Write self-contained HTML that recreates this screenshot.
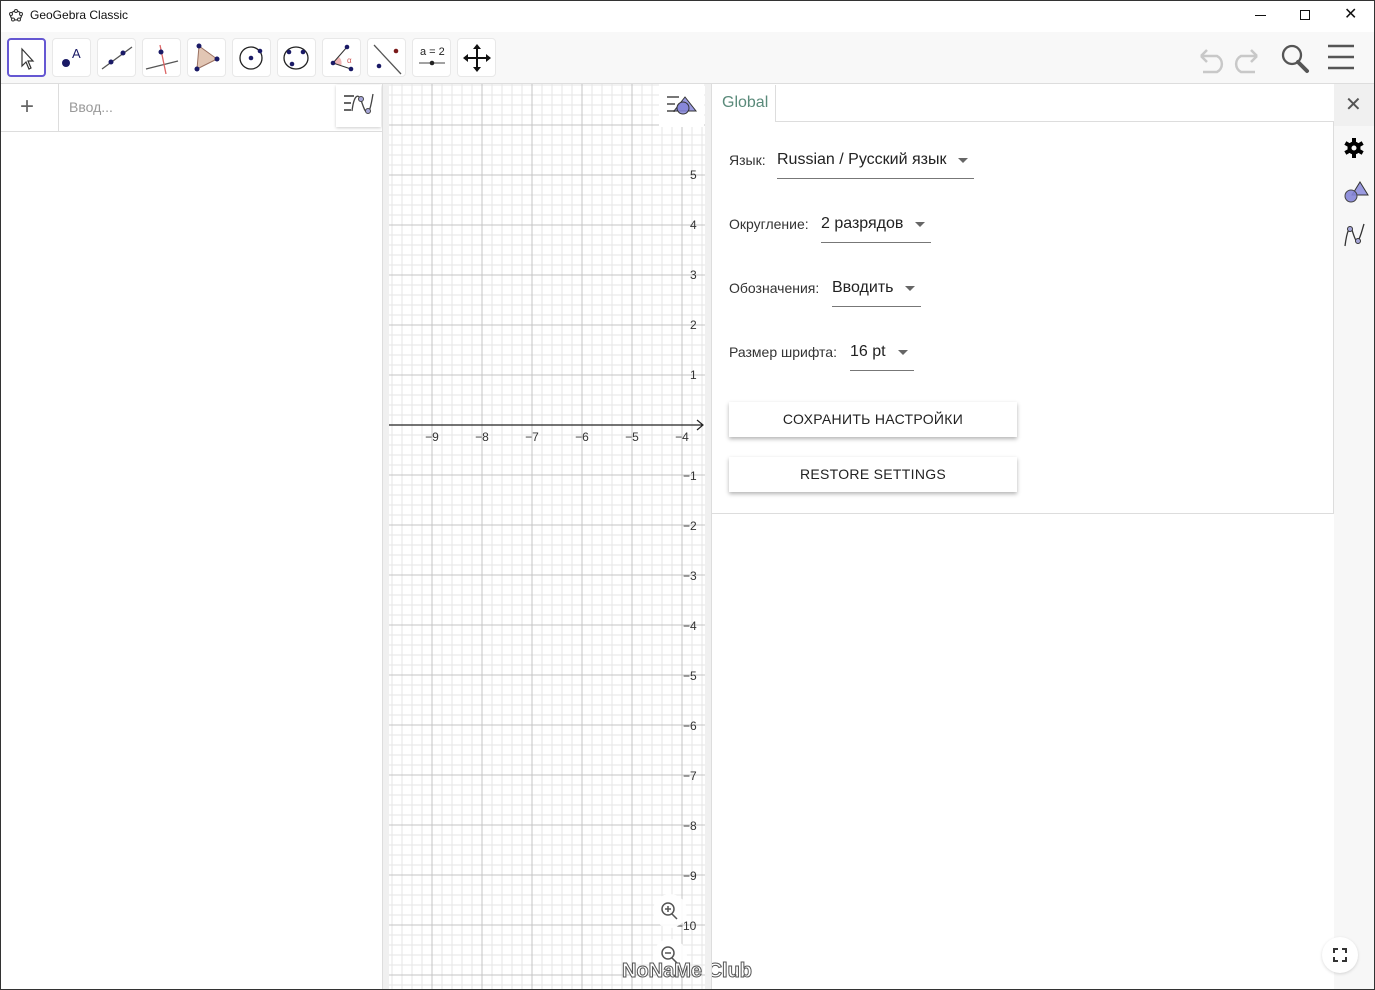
<!DOCTYPE html>
<html><head><meta charset="utf-8"><style>
*{box-sizing:border-box;margin:0;padding:0}
body{width:1375px;height:990px;overflow:hidden;background:#fff;font-family:"Liberation Sans","Noto Sans CJK SC",sans-serif;position:relative}
.abs{position:absolute}
.tb{left:0;top:32px;width:1375px;height:52px;background:#f8f8f8;border-bottom:1px solid #ddd}
.tool{position:absolute;top:6px;width:39px;height:39px;border-radius:4px;background:#fff;border:1px solid #e8e8e8}
.lbl{font-size:14px;color:#333;position:absolute;white-space:nowrap}
.sel{position:absolute;font-size:16px;color:#222;border-bottom:1px solid #777;height:28px;white-space:nowrap}
.sel i{position:absolute;right:6px;top:7px;width:0;height:0;border-left:5px solid transparent;border-right:5px solid transparent;border-top:5px solid #666}
.btn{position:absolute;left:729px;width:288px;height:35px;background:#fff;box-shadow:0 2px 4px rgba(0,0,0,.3);font-size:14px;color:#222;text-align:center;line-height:35px;letter-spacing:.3px}
</style></head><body>
<div class="abs" style="left:0;top:0;width:1375px;height:32px;background:#fff"></div>
<svg class="abs" style="left:9px;top:8px" width="14" height="14" viewBox="0 0 14 14"><ellipse cx="7" cy="7.5" rx="5.5" ry="4.5" fill="none" stroke="#333" stroke-width="1.2"/><circle cx="2" cy="6" r="1.5" fill="#fff" stroke="#333"/><circle cx="7" cy="3" r="1.5" fill="#fff" stroke="#333"/><circle cx="12" cy="6" r="1.5" fill="#fff" stroke="#333"/><circle cx="4" cy="11.5" r="1.5" fill="#fff" stroke="#333"/><circle cx="10" cy="11.5" r="1.5" fill="#fff" stroke="#333"/></svg>
<div class="abs" style="left:30px;top:8px;font-size:12px;color:#111">GeoGebra Classic</div>
<div class="abs" style="left:1255px;top:15px;width:11px;height:1px;background:#111"></div>
<div class="abs" style="left:1300px;top:10px;width:10px;height:10px;border:1px solid #111"></div>
<div class="abs" style="left:1344px;top:4px;font-size:16px;color:#111">✕</div>

<div class="abs tb"></div>
<div class="tool" style="left:7px;top:38px;border:2px solid #6557d2"><svg width="35" height="35"><path d="M13 9 L13 26 L17 22 L20 29 L22 28 L19 21 L24 21 Z" fill="#fff" stroke="#333" stroke-width="1.2"/></svg></div>
<div class="tool" style="left:52px;top:38px"><svg width="37" height="37"><circle cx="13" cy="24" r="4" fill="#1a1a66"/><text x="19" y="19" font-size="13" fill="#1a1a66" font-family="Liberation Sans">A</text></svg></div>
<div class="tool" style="left:97px;top:38px"><svg width="37" height="37"><line x1="4" y1="30" x2="34" y2="8" stroke="#555" stroke-width="1.3"/><circle cx="13" cy="23" r="2.5" fill="#1a1a66"/><circle cx="25" cy="14" r="2.5" fill="#1a1a66"/></svg></div>
<div class="tool" style="left:142px;top:38px"><svg width="37" height="37"><line x1="3" y1="30" x2="35" y2="22" stroke="#555" stroke-width="1.3"/><line x1="17" y1="6" x2="23" y2="35" stroke="#d66" stroke-width="1.3"/><circle cx="18" cy="13" r="2.5" fill="#1a1a66"/></svg></div>
<div class="tool" style="left:187px;top:38px"><svg width="37" height="37"><path d="M11 7 L29 20 L9 30 Z" fill="#e2c6b4" stroke="#9a7060"/><circle cx="11" cy="7" r="2.5" fill="#1a1a66"/><circle cx="29" cy="20" r="2.5" fill="#1a1a66"/><circle cx="9" cy="30" r="2.5" fill="#1a1a66"/></svg></div>
<div class="tool" style="left:232px;top:38px"><svg width="37" height="37"><circle cx="18" cy="19" r="11" fill="none" stroke="#222" stroke-width="1.3"/><circle cx="18" cy="19" r="2.3" fill="#1a1a66"/><circle cx="27" cy="12" r="2.3" fill="#1a1a66"/></svg></div>
<div class="tool" style="left:277px;top:38px"><svg width="37" height="37"><ellipse cx="18" cy="19" rx="12" ry="11" fill="none" stroke="#222" stroke-width="1.3"/><circle cx="11" cy="13" r="2.3" fill="#1a1a66"/><circle cx="25" cy="13" r="2.3" fill="#1a1a66"/><circle cx="14" cy="25" r="2.3" fill="#1a1a66"/></svg></div>
<div class="tool" style="left:322px;top:38px"><svg width="37" height="37"><path d="M10 24 L18 27 A8 8 0 0 0 16 18 Z" fill="#f2b8b8"/><line x1="10" y1="24" x2="24" y2="8" stroke="#333"/><line x1="10" y1="24" x2="28" y2="30" stroke="#333"/><circle cx="10" cy="24" r="2.3" fill="#1a1a66"/><circle cx="24" cy="8" r="2.3" fill="#1a1a66"/><circle cx="28" cy="30" r="2.3" fill="#1a1a66"/><text x="24" y="24" font-size="8" fill="#c55">α</text></svg></div>
<div class="tool" style="left:367px;top:38px"><svg width="37" height="37"><line x1="6" y1="6" x2="33" y2="35" stroke="#555" stroke-width="1.3"/><circle cx="28" cy="12" r="2.3" fill="#7a1a1a"/><circle cx="11" cy="27" r="2.3" fill="#1a1a66"/></svg></div>
<div class="tool" style="left:412px;top:38px"><svg width="37" height="37"><text x="7" y="16" font-size="11" fill="#222" font-family="Liberation Sans">a = 2</text><line x1="6" y1="24" x2="32" y2="24" stroke="#444"/><circle cx="19" cy="24" r="2.3" fill="#222"/></svg></div>
<div class="tool" style="left:457px;top:38px"><svg width="37" height="37"><path d="M19 7 V31 M7 19 H31" stroke="#111" stroke-width="2"/><path d="M19 5 L15 10 H23Z M19 33 L15 28 H23Z M5 19 L10 15 V23Z M33 19 L28 15 V23Z" fill="#111"/></svg></div>

<svg class="abs" style="left:1195px;top:42px" width="160" height="32"><path d="M6 14 H22 A9 9 0 0 1 22 30 H8 M6 14 L12 8 M6 14 L12 20" fill="none" stroke="#c8c8c8" stroke-width="2.5"/><path d="M62 14 H46 A9 9 0 0 0 46 30 H60 M62 14 L56 8 M62 14 L56 20" fill="none" stroke="#c8c8c8" stroke-width="2.5"/><circle cx="97" cy="13" r="9" fill="none" stroke="#555" stroke-width="2.3"/><path d="M103 20 L112 29" stroke="#555" stroke-width="4" stroke-linecap="round"/><path d="M134 4 H160 M134 15 H160 M134 26 H160" stroke="#555" stroke-width="2.5" transform="translate(-1,0)"/></svg>

<div class="abs" style="left:0;top:84px;width:382px;height:906px;background:#fff"></div>
<div class="abs" style="left:0;top:131px;width:382px;height:1px;background:#ddd"></div>
<div class="abs" style="left:58px;top:84px;width:1px;height:47px;background:#ddd"></div>
<div class="abs" style="left:20px;top:93px;font-size:24px;color:#666;font-weight:300">+</div>
<div class="abs" style="left:69px;top:99px;font-size:14px;color:#999">Ввод...</div>
<div class="abs" style="left:336px;top:85px;width:45px;height:42px;background:#fff;box-shadow:0 1px 3px rgba(0,0,0,.2)"><svg width="45" height="42"><path d="M8 11 H18 M8 18 H15 M8 25 H15" stroke="#666" stroke-width="2"/><path d="M16 26 C18 10 22 8 25 15 C28 24 30 30 33 26 C35 22 36 14 37 9" fill="none" stroke="#444" stroke-width="1.3"/><circle cx="25" cy="14" r="2.5" fill="#a6a6d8" stroke="#444"/><circle cx="32" cy="26" r="2.5" fill="#a6a6d8" stroke="#444"/></svg></div>
<div class="abs" style="left:382px;top:84px;width:7px;height:906px;background:#f0f0f0;border-left:1px solid #ddd"></div>

<svg class="abs" style="left:389px;top:84px" width="316" height="906">
<path stroke="#e6e6e6" d="M3 0V906M13 0V906M23 0V906M33 0V906M53 0V906M63 0V906M73 0V906M83 0V906M103 0V906M113 0V906M123 0V906M133 0V906M153 0V906M163 0V906M173 0V906M183 0V906M203 0V906M213 0V906M223 0V906M233 0V906M253 0V906M263 0V906M273 0V906M283 0V906M303 0V906M313 0V906"/>
<path stroke="#e6e6e6" d="M0 1H316M0 11H316M0 21H316M0 31H316M0 51H316M0 61H316M0 71H316M0 81H316M0 101H316M0 111H316M0 121H316M0 131H316M0 151H316M0 161H316M0 171H316M0 181H316M0 201H316M0 211H316M0 221H316M0 231H316M0 251H316M0 261H316M0 271H316M0 281H316M0 301H316M0 311H316M0 321H316M0 331H316M0 351H316M0 361H316M0 371H316M0 381H316M0 401H316M0 411H316M0 421H316M0 431H316M0 451H316M0 461H316M0 471H316M0 481H316M0 501H316M0 511H316M0 521H316M0 531H316M0 551H316M0 561H316M0 571H316M0 581H316M0 601H316M0 611H316M0 621H316M0 631H316M0 651H316M0 661H316M0 671H316M0 681H316M0 701H316M0 711H316M0 721H316M0 731H316M0 751H316M0 761H316M0 771H316M0 781H316M0 801H316M0 811H316M0 821H316M0 831H316M0 851H316M0 861H316M0 871H316M0 881H316M0 901H316"/>
<path stroke="#c4c4c4" d="M43 0V906M93 0V906M143 0V906M193 0V906M243 0V906M293 0V906M0 41H316M0 91H316M0 141H316M0 191H316M0 241H316M0 291H316M0 391H316M0 441H316M0 491H316M0 541H316M0 591H316M0 641H316M0 691H316M0 741H316M0 791H316M0 841H316M0 891H316"/>
<path stroke="#222" stroke-width="1.2" d="M0 341H314M308 336L314 341L308 346" fill="none"/>
<g font-family="Liberation Sans" font-size="12" fill="#333" text-anchor="middle">
<text x="43" y="357">−9</text><text x="93" y="357">−8</text><text x="143" y="357">−7</text><text x="193" y="357">−6</text><text x="243" y="357">−5</text><text x="293" y="357">−4</text>
</g>
<g font-family="Liberation Sans" font-size="12" fill="#333">
<text x="301" y="95">5</text><text x="301" y="145">4</text><text x="301" y="195">3</text><text x="301" y="245">2</text><text x="301" y="295">1</text>
<text x="294" y="396">−1</text><text x="294" y="446">−2</text><text x="294" y="496">−3</text><text x="294" y="546">−4</text><text x="294" y="596">−5</text><text x="294" y="646">−6</text><text x="294" y="696">−7</text><text x="294" y="746">−8</text><text x="294" y="796">−9</text><text x="287" y="846">−10</text>
</g>
<rect x="270" y="0" width="45" height="43" fill="#fff"/>
<path d="M278 13H290M278 20H286M278 27H286" stroke="#777" stroke-width="2"/>
<path d="M296 13L307 27H285Z" fill="#9a9ae0" stroke="#333" stroke-width="1"/><circle cx="294" cy="24" r="6" fill="#8585d8" fill-opacity=".85" stroke="#333"/>
<circle cx="281" cy="827" r="17" fill="#fff" fill-opacity=".9"/>
<circle cx="279" cy="825" r="6" fill="none" stroke="#555" stroke-width="1.5"/><path d="M283 830L288 835M276 825H282M279 822V828" stroke="#555" stroke-width="1.5"/>
<circle cx="281" cy="872" r="17" fill="#fff" fill-opacity=".9"/>
<circle cx="279" cy="869" r="6" fill="none" stroke="#555" stroke-width="1.5"/><path d="M283 874L288 879M276 869H282" stroke="#555" stroke-width="1.5"/>
</svg>
<div class="abs" style="left:622px;top:960px;font-size:20px;font-weight:bold;color:#fff;-webkit-text-stroke:1px #555;white-space:nowrap">NoNaMe Club</div>
<div class="abs" style="left:705px;top:84px;width:7px;height:906px;background:#f0f0f0;border-right:1px solid #ddd"></div>

<div class="abs" style="left:712px;top:121px;width:622px;height:393px;border:1px solid #ddd;border-left:none"></div>
<div class="abs" style="left:712px;top:85px;width:64px;height:37px;background:#fff;border-right:1px solid #ddd"></div>
<div class="abs" style="left:722px;top:94px;font-size:16px;color:#5a8a7a">Global</div>
<div class="lbl" style="left:729px;top:152px">Язык:</div>
<div class="sel" style="left:777px;top:151px;width:197px">Russian / Русский язык <i></i></div>
<div class="lbl" style="left:729px;top:216px">Округление:</div>
<div class="sel" style="left:821px;top:215px;width:110px">2 разрядов <i></i></div>
<div class="lbl" style="left:729px;top:280px">Обозначения:</div>
<div class="sel" style="left:832px;top:279px;width:89px">Вводить <i></i></div>
<div class="lbl" style="left:729px;top:344px">Размер шрифта:</div>
<div class="sel" style="left:850px;top:343px;width:64px">16 pt <i></i></div>
<div class="btn" style="top:402px">СОХРАНИТЬ НАСТРОЙКИ</div>
<div class="btn" style="top:457px">RESTORE SETTINGS</div>

<div class="abs" style="left:1334px;top:84px;width:41px;height:906px;background:#f7f7f7"></div>
<div class="abs" style="left:1334px;top:84px;width:41px;height:42px;background:#f0f0f0"></div>
<div class="abs" style="left:1345px;top:92px;font-size:20px;color:#555">✕</div>
<svg class="abs" style="left:1340px;top:135px" width="30" height="120">
<g transform="translate(14,13)"><circle r="6.5" fill="#000"/><g fill="#000"><rect x="-2" y="-10" width="4" height="20"/><rect x="-2" y="-10" width="4" height="20" transform="rotate(60)"/><rect x="-2" y="-10" width="4" height="20" transform="rotate(120)"/></g><circle r="2.5" fill="#f7f7f7"/></g>
<path d="M20 47L28 60H12Z" fill="#9a9ae0" stroke="#333"/><circle cx="11" cy="61" r="6" fill="#8585d8" fill-opacity=".9" stroke="#444"/>
<path d="M5 111 C7 95 10 90 12 95 C14 101 16 108 18 106 C21 101 22 95 24 89" fill="none" stroke="#333" stroke-width="1.3"/><circle cx="10" cy="94" r="2.5" fill="#a6a6d8" stroke="#333"/><circle cx="18" cy="106" r="2.5" fill="#a6a6d8" stroke="#333"/>
</svg>
<div class="abs" style="left:1322px;top:937px;width:36px;height:36px;border-radius:50%;background:#fff;box-shadow:0 1px 3px rgba(0,0,0,.15)"></div>
<svg class="abs" style="left:1333px;top:948px" width="14" height="14"><path d="M1 5V1H5M9 1H13V5M13 9V13H9M5 13H1V9" fill="none" stroke="#333" stroke-width="2"/></svg>
<div class="abs" style="left:0;top:0;width:1375px;height:990px;border:1px solid #333;pointer-events:none"></div>
</body></html>
